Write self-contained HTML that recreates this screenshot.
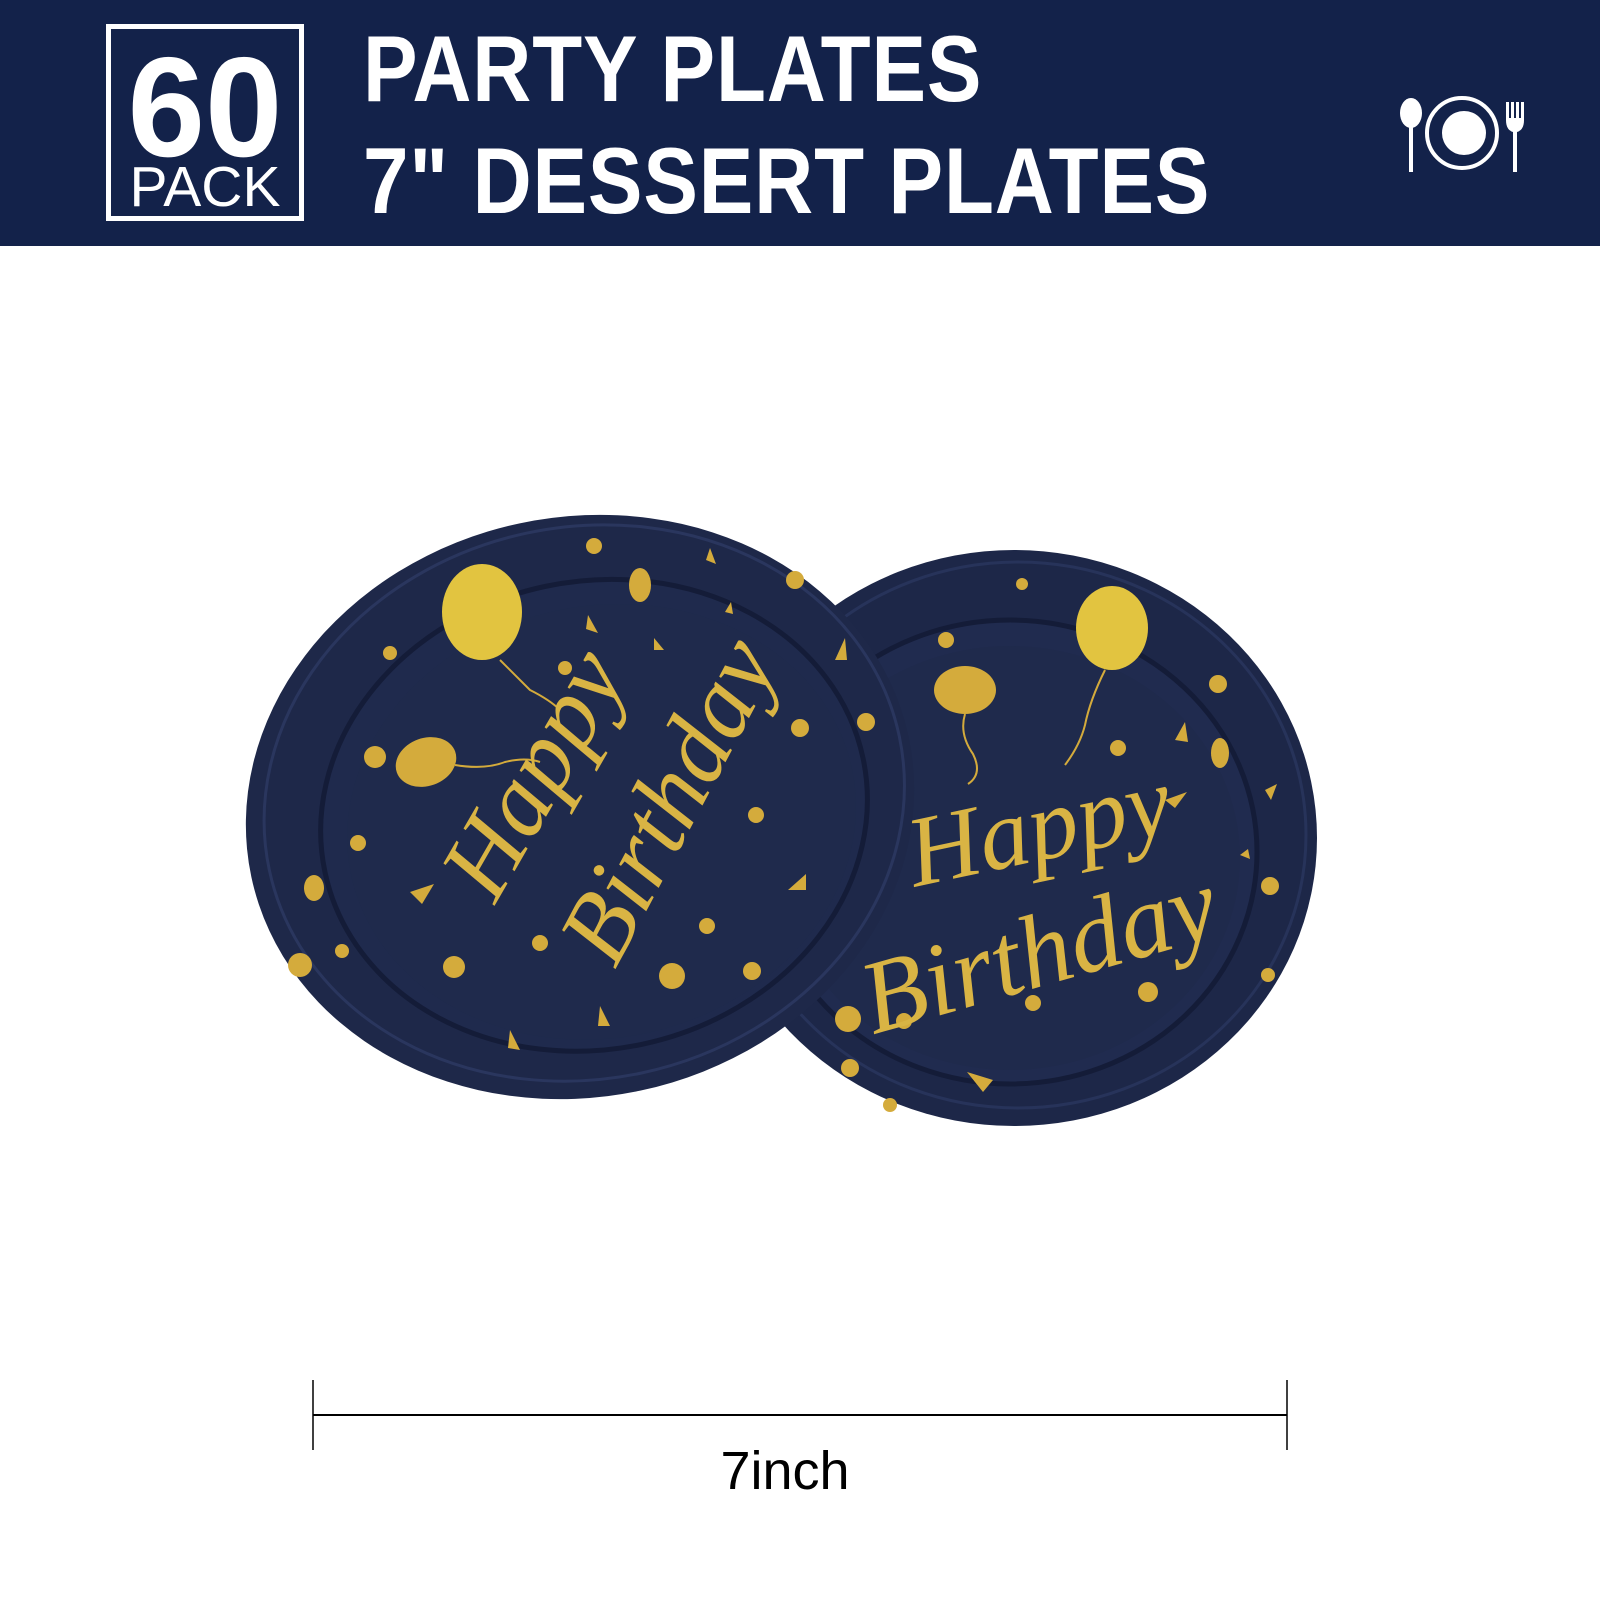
<!DOCTYPE html>
<html><head><meta charset="utf-8"><style>
html,body{margin:0;padding:0;background:#fff;}
body{width:1600px;height:1600px;position:relative;overflow:hidden;font-family:"Liberation Sans",sans-serif;}
.hdr{position:absolute;left:0;top:0;width:1600px;height:246px;background:#13224a;}
.box{position:absolute;left:106px;top:24px;width:188px;height:187px;border:5px solid #fff;}
.sixty{position:absolute;left:0;width:188px;top:8px;text-align:center;color:#fff;font-weight:bold;font-size:142px;line-height:142px;transform:scaleX(0.98);letter-spacing:0px;}
.pack{position:absolute;left:0;width:188px;top:128px;text-align:center;color:#fff;font-size:57px;line-height:60px;}
.t{position:absolute;left:363px;color:#fff;font-weight:bold;font-size:94px;line-height:94px;letter-spacing:1px;transform:scaleX(0.87);transform-origin:0 0;white-space:nowrap;}
svg{position:absolute;left:0;top:0;}
.inch{position:absolute;left:700px;width:170px;text-align:center;top:1441px;font-size:54px;line-height:60px;color:#000;}
</style></head><body>
<div class="hdr">
 <div class="box"><div class="sixty">60</div><div class="pack">PACK</div></div>
 <div class="t" style="top:22px">PARTY PLATES</div>
 <div class="t" style="top:134px">7" DESSERT PLATES</div>
</div>
<svg width="1600" height="1600" viewBox="0 0 1600 1600">
 <g fill="#fff">
  <ellipse cx="1411" cy="113" rx="11" ry="15"/>
  <rect x="1409" y="120" width="4" height="52"/>
  <circle cx="1462" cy="133" r="35" fill="none" stroke="#fff" stroke-width="4"/>
  <ellipse cx="1464" cy="133" rx="22" ry="22"/>
  <path d="M1506 102 v18 q0 10 7 12 v40 h4 v-40 q7 -2 7 -12 v-18 h-3 v16 h-2 v-16 h-3 v16 h-2 v-16 h-3 v16 h-2 v-16z"/>
 </g>
 <!-- right plate -->
 <g>
  <ellipse cx="1014" cy="838" rx="303" ry="288" fill="#1d2748"/>
  <ellipse cx="1018" cy="835" rx="288" ry="273" fill="none" stroke="#27335a" stroke-width="3"/>
  <ellipse cx="1010" cy="852" rx="247" ry="232" fill="#202b4f"/>
  <ellipse cx="1010" cy="852" rx="247" ry="232" fill="none" stroke="#141c38" stroke-width="5"/>
  <ellipse cx="1010" cy="858" rx="230" ry="212" fill="#1f2a4c"/>
  <g fill="#d4ab3c">
   <ellipse cx="1112" cy="628" rx="36" ry="42" fill="#e2c440"/>
   <ellipse cx="965" cy="690" rx="31" ry="24"/>
   <circle cx="946" cy="640" r="8"/><circle cx="1022" cy="584" r="6"/>
   <circle cx="1218" cy="684" r="9"/><ellipse cx="1220" cy="753" rx="9" ry="15"/>
   <circle cx="1118" cy="748" r="8"/><circle cx="1148" cy="992" r="10"/>
   <circle cx="1033" cy="1003" r="8"/><circle cx="848" cy="1019" r="13"/><circle cx="904" cy="1021" r="8"/>
   <circle cx="1270" cy="886" r="9"/><circle cx="1268" cy="975" r="7"/><circle cx="850" cy="1068" r="9"/><circle cx="890" cy="1105" r="7"/>
   <path d="M1165 800 l22 -8 l-12 16z"/><path d="M1265 790 l12 -6 l-6 16z"/><path d="M1175 740 l10 -18 l3 20z"/>
   <path d="M967 1072 l26 8 l-10 12z"/><path d="M1240 855 l8 -6 l2 10z"/>
  </g>
  <path d="M965 714 q-6 20 8 40 q10 20 -5 30" stroke="#d4ab3c" stroke-width="2" fill="none"/>
  <path d="M1105 670 q-15 30 -20 55 q-5 20 -20 40" stroke="#d4ab3c" stroke-width="2" fill="none"/>
  <g fill="#d9b444" font-family="Liberation Serif,serif" font-style="italic">
   <text x="905" y="868" font-size="100" transform="rotate(-12 1000 830)">Happy</text>
   <text x="850" y="990" font-size="104" transform="rotate(-16 1020 930)">Birthday</text>
  </g>
 </g>
 <!-- left plate -->
 <g>
  <g transform="rotate(-12 580 807)">
  <ellipse cx="580" cy="807" rx="336" ry="290" fill="#1e2849"/>
  <ellipse cx="585" cy="804" rx="322" ry="276" fill="none" stroke="#2a365e" stroke-width="3"/>
  <ellipse cx="592" cy="818" rx="275" ry="234" fill="#1f2a4d"/>
  <ellipse cx="592" cy="818" rx="275" ry="234" fill="none" stroke="#141c38" stroke-width="5"/>
  <ellipse cx="598" cy="826" rx="256" ry="216" fill="#1f2a4c"/>
  </g>
  <g fill="#d4ab3c">
   <ellipse cx="482" cy="612" rx="40" ry="48" fill="#e2c440"/>
   <ellipse cx="426" cy="762" rx="31" ry="24" transform="rotate(-20 426 762)"/>
   <ellipse cx="640" cy="585" rx="11" ry="17"/><circle cx="594" cy="546" r="8"/><circle cx="795" cy="580" r="9"/>
   <circle cx="390" cy="653" r="7"/><circle cx="375" cy="757" r="11"/><circle cx="565" cy="668" r="7"/>
   <circle cx="800" cy="728" r="9"/><circle cx="756" cy="815" r="8"/><circle cx="358" cy="843" r="8"/>
   <ellipse cx="314" cy="888" rx="10" ry="13"/><circle cx="300" cy="965" r="12"/><circle cx="342" cy="951" r="7"/>
   <circle cx="454" cy="967" r="11"/><circle cx="540" cy="943" r="8"/><circle cx="672" cy="976" r="13"/>
   <circle cx="707" cy="926" r="8"/><circle cx="752" cy="971" r="9"/><circle cx="866" cy="722" r="9"/>
   <path d="M410 892 l24 -8 l-12 20z"/><path d="M788 890 l18 -16 l0 16z"/><path d="M588 615 l10 18 l-12 -4z"/>
   <path d="M710 548 l6 16 l-10 -4z"/><path d="M654 638 l10 12 l-10 0z"/><path d="M725 612 l6 -10 l2 12z"/>
   <path d="M835 660 l10 -22 l2 22z"/><path d="M600 1006 l10 20 l-12 0z"/><path d="M510 1030 l10 20 l-12 -2z"/>
  </g>
  <path d="M500 660 q20 20 30 30 q20 10 30 20" stroke="#d4ab3c" stroke-width="2" fill="none"/>
  <path d="M455 765 q30 5 50 -3 q20 -5 35 0" stroke="#d4ab3c" stroke-width="2" fill="none"/>
  <g fill="#d9b444" font-family="Liberation Serif,serif" font-style="italic">
   <text x="495" y="905" font-size="100" transform="rotate(-60 495 905)">Happy</text>
   <text x="615" y="970" font-size="100" transform="rotate(-62 615 970)">Birthday</text>
  </g>
 </g>
 <line x1="313" y1="1415" x2="1287" y2="1415" stroke="#000" stroke-width="2"/>
 <line x1="313" y1="1380" x2="313" y2="1450" stroke="#000" stroke-width="1.5"/>
 <line x1="1287" y1="1380" x2="1287" y2="1450" stroke="#000" stroke-width="1.5"/>
</svg>
<div class="inch">7inch</div>
</body></html>
